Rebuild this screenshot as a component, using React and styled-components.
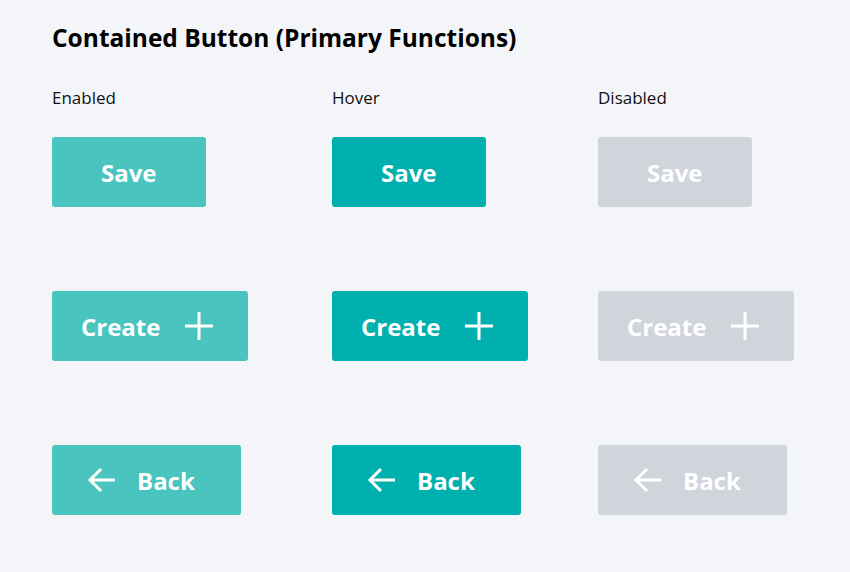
import styled, { createGlobalStyle } from "styled-components";

const GlobalStyle = createGlobalStyle`
  html, body {
    margin: 0;
    padding: 0;
    background: #f4f5f9;
  }
  body {
    font-family: "Open Sans", "Noto Sans", sans-serif;
    color: #000;
  }
`;

const colors = {
  enabled: "#4ac4bf",
  hover: "#00b0ae",
  disabled: "#d0d4db",
};

const PlusIcon = () => (
  <svg width="32" height="32" viewBox="0 0 32 32" fill="none">
    <path d="M16 2v28M2 16h28" stroke="#fff" strokeWidth="3" />
  </svg>
);

const ArrowIcon = () => (
  <svg width="32" height="32" viewBox="0 0 32 32" fill="none">
    <path
      d="M29 16H4M15 5L4 16l11 11"
      stroke="#fff"
      strokeWidth="3"
      strokeLinejoin="miter"
    />
  </svg>
);

const states = [
  { key: "enabled", label: "Enabled" },
  { key: "hover", label: "Hover" },
  { key: "disabled", label: "Disabled" },
];

const App = () => {
  return (
    <Page>
      <GlobalStyle />
      <Title>Contained Button (Primary Functions)</Title>
      <Labels>
        {states.map((s) => (
          <Label key={s.key}>{s.label}</Label>
        ))}
      </Labels>
      <Grid>
        {states.map((s) => (
          <Cell key={"save" + s.key}>
            <Button $state={s.key} $pad="0 49px">
              Save
            </Button>
          </Cell>
        ))}
        {states.map((s) => (
          <Cell key={"create" + s.key}>
            <Button $state={s.key} $pad="0 33px 0 29px" $gap="23px">
              Create
              <PlusIcon />
            </Button>
          </Cell>
        ))}
        {states.map((s) => (
          <Cell key={"back" + s.key}>
            <Button $state={s.key} $pad="0 46px 0 34px" $gap="19px">
              <ArrowIcon />
              Back
            </Button>
          </Cell>
        ))}
      </Grid>
    </Page>
  );
};

export default App;

const Page = styled.div`
  padding: 22px 52px 40px 52px;
`;

const Title = styled.h1`
  margin: 0;
  font-size: 24.5px;
  font-weight: 700;
  line-height: 32px;
`;

const columns = `280px 266px auto`;

const Labels = styled.div`
  display: grid;
  grid-template-columns: ${columns};
  margin-top: 32px;
`;

const Label = styled.div`
  font-size: 17px;
  line-height: 24px;
  color: #111;
`;

const Grid = styled.div`
  display: grid;
  grid-template-columns: ${columns};
  grid-auto-rows: 70px;
  row-gap: 84px;
  margin-top: 27px;
`;

const Cell = styled.div`
  display: flex;
  align-items: flex-start;
`;

const Button = styled.button`
  display: inline-flex;
  align-items: center;
  justify-content: center;
  gap: ${(p) => p.$gap || "0"};
  height: 70px;
  padding: ${(p) => p.$pad};
  border: none;
  border-radius: 3px;
  background: ${(p) => colors[p.$state]};
  color: #fff;
  font-family: "Open Sans", "Noto Sans", sans-serif;
  font-size: 24px;
  font-weight: 700;
  cursor: ${(p) => (p.$state === "disabled" ? "default" : "pointer")};
`;
